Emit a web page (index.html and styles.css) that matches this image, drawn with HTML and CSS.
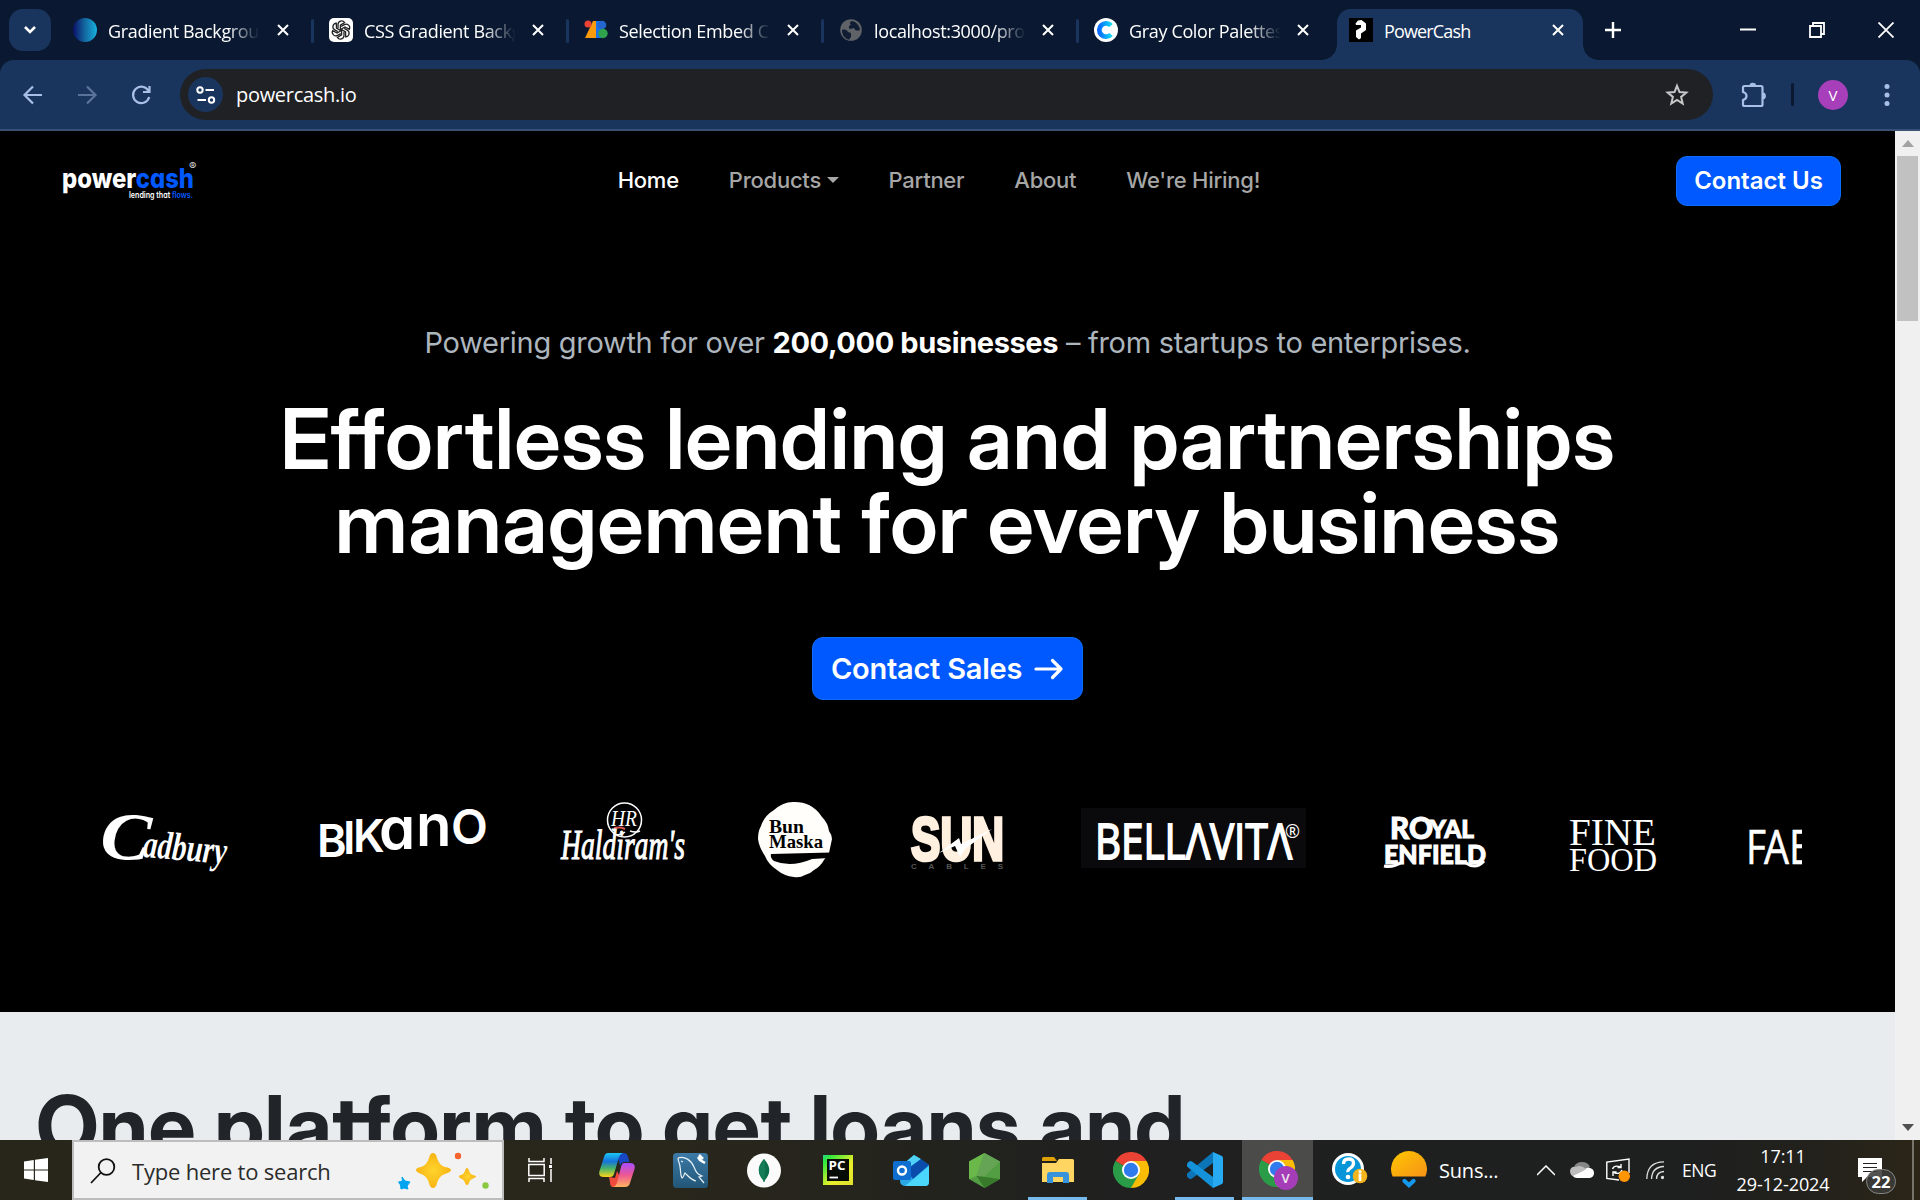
FILE: index.html
```html
<!DOCTYPE html>
<html lang="en">
<head>
<meta charset="utf-8">
<title>PowerCash</title>
<link rel="stylesheet" href="styles.css">
</head>
<body>
<svg class="defs" width="0" height="0">
  <defs>
    <symbol id="x" viewBox="0 0 12 12"><path d="M1 1 11 11M11 1 1 11" stroke="#fff" stroke-width="2" fill="none"/></symbol>
    <symbol id="chrome" viewBox="0 0 36 36">
      <path d="M18 18 2.4 9A18 18 0 0 1 33.6 9Z" fill="#ea4335"/>
      <path d="M18 18V9H33.6A18 18 0 0 1 18 36Z" fill="#fbbc05"/>
      <path d="M18 18 25.8 22.5 18 36A18 18 0 0 1 2.4 9Z" fill="#2a9c48"/>
      <circle cx="18" cy="18" r="9" fill="#fff"/><circle cx="18" cy="18" r="7.2" fill="#2f7bee"/>
    </symbol>
  </defs>
</svg>
<div class="screen">
  <header class="tabstrip">
    <button class="tab-search"><svg width="14" height="10" viewBox="0 0 14 10"><path d="M2 2l5 5 5-5" stroke="#fff" stroke-width="2.6" fill="none"/></svg></button>
    <div class="tabs">
      <div class="tab"><svg class="fav" viewBox="0 0 24 24"><defs><linearGradient id="gb"><stop offset="0" stop-color="#0b0f68"/><stop offset=".5" stop-color="#1369a0"/><stop offset="1" stop-color="#18b0e0"/></linearGradient></defs><circle cx="12" cy="12" r="12" fill="url(#gb)"/></svg><span class="title">Gradient Background</span><svg class="close"><use href="#x"/></svg></div>
      <div class="tab"><svg class="fav" viewBox="0 0 24 24"><rect width="24" height="24" rx="5" fill="#fff"/><g fill="none" stroke="#222" stroke-width="1.3"><path id="pt" d="M9 10V6.5a3.6 3.6 0 0 1 6.6-2l-4.200 2.600v5"/><use href="#pt" transform="rotate(60 12 12)"/><use href="#pt" transform="rotate(120 12 12)"/><use href="#pt" transform="rotate(180 12 12)"/><use href="#pt" transform="rotate(240 12 12)"/><use href="#pt" transform="rotate(300 12 12)"/></g></svg><span class="title">CSS Gradient Backgr</span><svg class="close"><use href="#x"/></svg></div>
      <div class="tab"><svg class="fav" viewBox="0 0 24 24"><path d="M1 20 9 3h4v17z" fill="#f99b0c"/><path d="M12 3h5a5 5 0 0 1 0 9v8h-5z" fill="#1a73e8"/><circle cx="18" cy="7" r="4.300" fill="#2466ce"/><circle cx="19" cy="15.500" r="4.700" fill="#2fa24b"/><circle cx="4" cy="6" r="3.500" fill="#ea4335"/></svg><span class="title">Selection Embed Co</span><svg class="close"><use href="#x"/></svg></div>
      <div class="tab"><svg class="fav" viewBox="0 0 24 24"><circle cx="12" cy="12" r="10.800" fill="#5f6368"/><path d="M3 12c3-1 5 0 6 2l3 1v4c-2 2-1 3-3 2.500A10 10 0 0 1 3 12zM13 3c-3 1-2 3-1 4-2 0-3 3-1 4l4-1c1 3 4 3 6 2A10 10 0 0 0 13 3z" fill="#101d33"/></svg><span class="title">localhost:3000/proj</span><svg class="close"><use href="#x"/></svg></div>
      <div class="tab"><svg class="fav" viewBox="0 0 24 24"><defs><linearGradient id="cg"><stop offset="0" stop-color="#0a6cff"/><stop offset="1" stop-color="#10d8f5"/></linearGradient></defs><circle cx="12" cy="12" r="12" fill="#fff"/><path d="M17 7.500a6.700 6.700 0 1 0 0 9" fill="none" stroke="url(#cg)" stroke-width="4.800"/></svg><span class="title">Gray Color Palettes</span><svg class="close"><use href="#x"/></svg></div>
      <div class="tab active"><svg class="fav" viewBox="0 0 24 24"><rect width="24" height="24"/><path d="M6.500 5.500 9 2.500 12.500 2 17 5.500V12L12 15.500V20L10 21.500 7 19V12.500L12 9.500V7H7z" fill="#fff"/></svg><span class="title">PowerCash</span><svg class="close"><use href="#x"/></svg></div>
    </div>
    <svg class="plus" width="16" height="16" viewBox="0 0 16 16"><path d="M8 0V16M0 8H16" stroke="#fff" stroke-width="2.400"/></svg>
    <div class="window-controls">
      <svg width="16" height="16" viewBox="0 0 16 16"><path d="M0 7.500H16" stroke="#fff" stroke-width="2"/></svg>
      <svg width="16" height="16" viewBox="0 0 16 16"><path d="M1 4H12V15H1ZM4 4V1H15V12H12" fill="none" stroke="#fff" stroke-width="1.800"/></svg>
      <svg width="16" height="16" viewBox="0 0 16 16"><path d="M.5.5 15.500 15.500M15.500.5.5 15.500" stroke="#fff" stroke-width="1.800"/></svg>
    </div>
  </header>

  <div class="toolbar">
    <svg class="tool" viewBox="0 0 24 24"><path d="M21 12H4M12 3.500 3.500 12l8.500 8.500" fill="none" stroke="#a9c0e6" stroke-width="2.200"/></svg>
    <svg class="tool" viewBox="0 0 24 24"><path d="M3 12H20M12 3.500 20.500 12 12 20.500" fill="none" stroke="#5a7398" stroke-width="2.200"/></svg>
    <svg class="tool" viewBox="0 0 24 24"><path d="M19.500 8A8.200 8.200 0 1 0 20.200 14M20.500 3V9H14" fill="none" stroke="#a9c0e6" stroke-width="2.200"/></svg>
    <div class="omnibox">
      <span class="site-info"><svg width="20" height="20" viewBox="0 0 20 20" fill="none" stroke="#fff" stroke-width="2"><circle cx="4" cy="5" r="2.700"/><path d="M9.500 5H18M1.500 15H10"/><circle cx="15.500" cy="15" r="2.700"/></svg></span>
      <span class="url">powercash.io</span>
      <svg class="star" width="24" height="24" viewBox="0 0 24 24"><path d="M12 2.800 14.500 9.100 21.300 9.500 16.100 13.900 17.700 20.500 12 16.900 6.300 20.500 7.900 13.900 2.700 9.500 9.500 9.100Z" fill="none" stroke="#c7c7c7" stroke-width="2"/></svg>
    </div>
    <svg class="puzzle" width="26" height="26" viewBox="0 0 26 26"><path d="M2 5.500Q2 4 3.500 4H20Q21.500 4 21.500 5.500V22.500Q21.500 24 20 24H3.500Q2 24 2 22.500V18Q5.500 17 5.500 14T2 10Z" fill="none" stroke="#a9c0e6" stroke-width="2.200"/><path d="M8.500 4a3.300 3.300 0 0 1 6.600 0M21.500 10.500a3.400 3.400 0 0 1 0 6.800" fill="#a9c0e6"/></svg>
    <span class="divider"></span>
    <span class="avatar">V</span>
    <svg class="dots" width="6" height="24" viewBox="0 0 6 24" fill="#a9c0e6"><circle cx="3" cy="3.500" r="2.500"/><circle cx="3" cy="12" r="2.500"/><circle cx="3" cy="20.500" r="2.500"/></svg>
  </div>

  <div class="viewport">
    <main class="page">
      <section class="hero">
        <nav class="nav">
          <svg class="brand" width="140" height="44" viewBox="60 158 140 44">
            <text class="geo" x="62" y="186.500" font-size="27" font-weight="800" textLength="132" lengthAdjust="spacingAndGlyphs" fill="#fff">power<tspan fill="#0059ff">cash</tspan></text>
            <text class="geo" x="129" y="196.500" font-size="8.800" font-weight="600" textLength="64" lengthAdjust="spacingAndGlyphs" fill="#fff">lending that <tspan fill="#0059ff">flows.</tspan></text>
            <text class="geo" x="189" y="169" font-size="11" fill="#ddd">®</text>
          </svg>
          <div class="links">
            <a class="current">Home</a><a>Products<i class="caret"></i></a><a>Partner</a><a>About</a><a>We're Hiring!</a>
          </div>
          <a class="btn contact">Contact Us</a>
        </nav>
        <p class="lead">Powering growth for over <b>200,000 businesses</b> – from startups to enterprises.</p>
        <h1>Effortless lending and partnerships<br>management for every business</h1>
        <a class="btn sales"><span>Contact Sales</span><svg width="30" height="24" viewBox="0 0 30 24"><path d="M2 12H27M18.500 3.500 27 12l-8.500 8.500" fill="none" stroke="#fff" stroke-width="3.200" stroke-linecap="round" stroke-linejoin="round"/></svg></a>
        <div class="clients">
          <svg width="207" height="90" viewBox="93 795 207 90" fill="#fff"><g transform="translate(99 857) rotate(5)"><text class="script" y="0" font-size="68" textLength="50" lengthAdjust="spacingAndGlyphs">C</text><text class="script" x="43" y="-4" font-size="39" textLength="84" lengthAdjust="spacingAndGlyphs">adbury</text></g></svg>
          <svg width="240" height="90" viewBox="300 795 240 90" fill="#fff"><text class="geo" font-size="45" font-weight="600" x="317 343 353 379 416 451" y="857 854 852 849 846 844">BIK<tspan font-size="58">an</tspan><tspan font-size="48">O</tspan></text></svg>
          <svg width="200" height="90" viewBox="540 795 200 90" fill="#fff"><circle cx="624.500" cy="820" r="17" fill="none" stroke="#fff" stroke-width="1.500"/><text class="serif" font-style="italic" x="611" y="826" font-size="24" textLength="26" lengthAdjust="spacingAndGlyphs">HR</text><path d="M614 828.500q5-2 11 .5" stroke="#d55" stroke-width="2" fill="none"/><path d="M613 833q6 4 12-1M630 831q6 2 10 0" stroke="#fff" stroke-width="1.500" fill="none"/><text class="serif" font-style="italic" x="561" y="859" font-size="42" stroke="#fff" stroke-width="1.100" textLength="124" lengthAdjust="spacingAndGlyphs">Haldiram's</text></svg>
          <svg width="140" height="90" viewBox="740 795 140 90"><path d="M795 802q8 0 14 3q8 4 13 12q6 6 7 14q3 4 3 8l-3 14-5 7q-4 7-10 10-4 4-9 5-5 3-11 2-10-1-17-7-9-6-12-14-6-9-7-17 0-8 3-13 3-10 13-16 10-9 21-8Z" fill="#fffefa"/><text class="serif" x="769" y="833" font-size="19" font-weight="700" textLength="35" lengthAdjust="spacingAndGlyphs">Bun</text><text class="serif" x="769" y="848" font-size="19" font-weight="700" textLength="54" lengthAdjust="spacingAndGlyphs">Maska</text><path d="M771 854 831 852.500 829 858 812 859Q791 868 774 861Q770 858 771 854Z"/></svg>
          <svg width="180" height="90" viewBox="880 795 180 90"><text class="cond" x="911" y="860" font-size="62" textLength="93" lengthAdjust="spacingAndGlyphs" fill="#fff0df" stroke="#fff0df" stroke-width="3.500">SUN</text><path d="M939 853 959 838 961 844 992 829 965 849 960 857 955 846Z" fill="#fff"/><text class="cond" x="911" y="869" font-size="8" textLength="92" fill="#555">CABLES</text></svg>
          <svg width="280" height="90" viewBox="1060 795 280 90" fill="#fff"><rect x="1081" y="808" width="225" height="60" fill="#0a0a0c"/><text class="sans" x="1095" y="859" font-size="50" textLength="197" lengthAdjust="spacingAndGlyphs" stroke="#fff" stroke-width="1.800">BELLΛVITΛ</text><text class="sans" x="1285" y="838" font-size="19" textLength="15" lengthAdjust="spacingAndGlyphs">®</text></svg>
          <svg width="200" height="90" viewBox="1340 795 200 90" fill="#fff" stroke="#fff"><text class="heavy" x="1390" y="839" font-size="30" textLength="43" lengthAdjust="spacingAndGlyphs">RO</text><text class="heavy" x="1430" y="838" font-size="25" textLength="44" lengthAdjust="spacingAndGlyphs">YAL</text><text class="heavy" x="1384" y="864" font-size="26" textLength="102" lengthAdjust="spacingAndGlyphs">ENFIELD</text><path d="M1384 866q9 2 18-4M1466 863q10 7 18-2" stroke-width="3" fill="none"/></svg>
          <svg width="200" height="90" viewBox="1540 795 200 90" fill="#fff"><text class="serif" x="1569" y="844.500" font-size="38" textLength="87" lengthAdjust="spacingAndGlyphs">FINE</text><text class="serif" x="1569" y="870.500" font-size="33" textLength="88" lengthAdjust="spacingAndGlyphs">FOOD</text></svg>
          <svg width="62" height="90" viewBox="1740 795 62 90" fill="#fff" stroke="#fff" stroke-width=".6"><text class="sans" y="864" font-size="47"><tspan x="1746" textLength="20" lengthAdjust="spacingAndGlyphs">F</tspan><tspan x="1764" textLength="25" lengthAdjust="spacingAndGlyphs">A</tspan><tspan x="1789" textLength="22" lengthAdjust="spacingAndGlyphs">E</tspan></text></svg>
        </div>
      </section>
      <section class="platform"><h2>One platform to get loans and</h2></section>
    </main>
    <div class="scrollbar">
      <svg width="12" height="7" viewBox="0 0 12 7"><path d="M0 7 6 0l6 7z" fill="#a3a3a3"/></svg>
      <span class="thumb"></span>
      <svg class="down" width="12" height="7" viewBox="0 0 12 7"><path d="M0 0H12L6 7z" fill="#505050"/></svg>
    </div>
  </div>

  <footer class="taskbar">
    <div class="start"><svg width="24" height="24" viewBox="0 0 24 24" fill="#fff"><path d="M0 3.400 9.800 2V11.400H0ZM11 1.800 24 0V11.400H11ZM0 12.600H9.800V22L0 20.600ZM11 12.600H24V24L11 22.200Z"/></svg></div>
    <div class="search">
      <svg width="26" height="26" viewBox="0 0 26 26"><circle cx="16.500" cy="9" r="7.800" fill="none" stroke="#111" stroke-width="1.800"/><path d="M11 14.500 1 25" stroke="#111" stroke-width="1.800"/></svg>
      <span>Type here to search</span>
      <svg class="sparkles" width="92" height="40" viewBox="396 1150 92 40"><defs><radialGradient id="sp"><stop offset="0" stop-color="#ffd42c"/><stop offset="1" stop-color="#f8b414"/></radialGradient></defs><path d="M432 1152q3 0 4 5 2 7 8 9 6 1 6 3t-6 4q-6 2-8 9-1 5-4 5t-4-5q-2-7-8-9-5-2-5-4t5-3q6-2 8-9 1-5 4-5Z" fill="url(#sp)"/><path d="M466 1167q1.500 0 2 3 1 3 4 4 3 .5 3 1.500t-3 2q-3 1-4 4-.5 2.500-2 2.500t-2-2.500q-1-3-4-4-2-.5-2-2t2-1.500q3-1 4-4 .5-3 2-3Z" fill="url(#sp)"/><path d="m401 1176 3 4 5 1-3 4 1 3-4-1-3 1-.5-4-2-3 4-1z" fill="#00a4ef" stroke="#00a4ef"/><circle cx="457" cy="1155" r="3.200" fill="#f4622d"/><circle cx="484.500" cy="1184.500" r="3.200" fill="#8bc840"/></svg>
    </div>
    <div class="apps">
      <span class="app"><svg width="24" height="24" viewBox="0 0 24 24" fill="none" stroke="#fff" stroke-width="1.500"><path d="M1 0V3.500H16V0M1 24V20.500H16V24M.8 6.500H16.200V17.500H.8ZM23 0V6M23 11V24"/><path d="M21 8.500h3.500" stroke-width="3"/></svg></span>
      <span class="app copilot"><svg width="36" height="34" viewBox="0 0 36 34"><defs><linearGradient id="c1" x2="0" y2="1"><stop stop-color="#1ac8f5"/><stop offset=".35" stop-color="#1672dc"/><stop offset=".65" stop-color="#48b567"/><stop offset="1" stop-color="#ffd51c"/></linearGradient><linearGradient id="c2" x2="0" y2="1"><stop stop-color="#a84dff"/><stop offset=".5" stop-color="#ed5792"/><stop offset="1" stop-color="#ffb45e"/></linearGradient></defs><path d="M18 0h7q3 0 4 4l1.500 5H26q-4 0-5 4z" fill="#1747c4"/><path d="M16 25 18 18l3 6-1 10h-7q-2-1-2-5l-1-5z" fill="#f04a3c"/><path d="M9 0H24q-3 1-4 4l-5 17q-1 3-4 3H5q-6 0-4.500-6L5 4Q6 0 9 0Z" fill="url(#c1)"/><path d="M25 10h6q6 0 4.500 6L31 30q-1 4-5 4H14q3-1 4-4l4-16q1-4 3-4Z" fill="url(#c2)"/></svg></span>
      <span class="app"><svg width="35" height="35" viewBox="0 0 35 35"><defs><linearGradient id="my" x2="0" y2="1"><stop stop-color="#3c7aa8"/><stop offset="1" stop-color="#225677"/></linearGradient></defs><rect width="35" height="35" rx="3.500" fill="url(#my)"/><path d="M5 5c7-2 13 2 16 9 2 5 3 7 8 9l-3 1 5 6M5 5c0 4 2 5 2 9 1 4 0 8 2 11 2-1 2-4 3-5 3 3 6 7 11 8M8 8l2 1" fill="none" stroke="#e6f1f7" stroke-width="1.200"/><path d="m25 4 2 3 5 3M26 2l4 4" stroke="#fff" stroke-width="2.500" fill="none"/></svg></span>
      <span class="app"><svg width="34" height="35" viewBox="0 0 34 35"><circle cx="17" cy="17.500" r="17" fill="#fbfbfb"/><path d="M17 6q10 11 1 21l-.5 2h-1L16 27Q7 17 17 6Z" fill="#0a6e49"/><path d="M17 6q3 10 0 22-10-11 0-22Z" fill="#147d57"/></svg></span>
      <span class="app"><svg width="30" height="30" viewBox="0 0 30 30"><defs><linearGradient id="pc" x2="1" y2="1"><stop stop-color="#21d789"/><stop offset=".15" stop-color="#33e83b"/><stop offset=".6" stop-color="#e9ee28"/><stop offset="1" stop-color="#e0e030"/></linearGradient></defs><rect width="30" height="30" fill="url(#pc)"/><rect x="4" y="4" width="22" height="22" fill="#070b05"/><text class="sans" x="5.500" y="15" font-size="11.500" font-weight="700" fill="#fff" textLength="17" lengthAdjust="spacingAndGlyphs">PC</text><path d="M6.500 22.500H15" stroke="#fff" stroke-width="1.800"/></svg></span>
      <span class="app"><svg width="36" height="31" viewBox="0 0 36 31"><path d="M9 10 21 0 36 10V27q0 4-4 4H13q-6 0-6-5z" fill="#29a8e5"/><path d="m21 0 7 4-14 10V6z" fill="#50d2f7"/><path d="m28 4 8 6-16 14-7-9z" fill="#0a4cac"/><path d="M36 11V27q0 4-4 4H12z" fill="#4bd7fb"/><rect y="6" width="18" height="19" rx="2" fill="#0f6fd0"/><circle cx="9" cy="15.500" r="4" fill="none" stroke="#fff" stroke-width="2.400"/></svg></span>
      <span class="app"><svg width="31" height="35" viewBox="0 0 31 35"><path d="M15.500 0 31 8.500V26L15.500 35 0 26V8.500Z" fill="#539e43"/><path d="m15.500 0-8 23L0 26V8.500Z" fill="#6ab84a"/><path d="m7.500 23 8 12 15.500-9z" fill="#38792c"/><path d="m15.500 0 15.500 8.500L16 23 7.500 23Z" fill="#64a454"/></svg></span>
      <span class="app running"><svg width="32" height="27" viewBox="0 0 32 27"><path d="M0 1.500Q0 0 1.500 0H12l3 4H0Z" fill="#dea003"/><path d="M0 6 14 6 17 2H30.500Q32 2 32 3.500V25H0Z" fill="#ffd561"/><path d="M5 26V18q0-3 3-3H24q3 0 3 3V26H21V20H11V26Z" fill="#3794dc"/></svg></span>
      <span class="app"><svg width="36" height="36"><use href="#chrome"/></svg></span>
      <span class="app running"><svg width="36" height="36" viewBox="0 0 36 36"><path d="M26 0V11L5 26.500q-1.500 1-3 0l-2-2q-1-1.500 0-3z" fill="#0b75b8"/><path d="M26 36V25L5 9.500q-1.500-1-3 0l-2 2q-1 1.500 0 3z" fill="#1593da"/><path d="m26 0 9 4q1 1 1 2V30q0 1-1 2l-9 4Z" fill="#28aaf2"/></svg></span>
      <span class="app current-app"><svg width="40" height="40" viewBox="0 0 40 40"><use href="#chrome" width="36" height="36" y="1"/><circle cx="27" cy="28" r="12" fill="#a63db8"/><text class="sans" x="22.500" y="33" font-size="13" font-weight="600" fill="#eee">V</text></svg></span>
      <span class="app"><svg width="36" height="34" viewBox="0 0 36 34"><circle cx="16" cy="16" r="16" fill="#fff"/><circle cx="16" cy="16" r="13" fill="#0795d9"/><path d="M11.500 11q0-5 5-5t5 4q0 3-3 5t-2.500 4" fill="none" stroke="#fff" stroke-width="3.300"/><circle cx="16" cy="24" r="2.300" fill="#fff"/><circle cx="28" cy="23" r="7.300" fill="#f4b41c"/><path d="M28 20.500V28" stroke="#fff" stroke-width="2.700"/><circle cx="28" cy="18.500" r="1.500" fill="#fff"/></svg></span>
    </div>
    <div class="weather"><svg width="36" height="38" viewBox="0 0 36 38"><defs><linearGradient id="sn" x2="1" y2="1"><stop stop-color="#ffc700"/><stop offset="1" stop-color="#f59218"/></linearGradient></defs><path d="M1.600 25.500A18 18 0 1 1 34.400 25.500Z" fill="url(#sn)"/><path d="m13.500 30 4.500 4 4.500-4" fill="none" stroke="#1698ec" stroke-width="4.300" stroke-linecap="round"/></svg><span>Suns...</span></div>
    <div class="tray">
      <svg width="18" height="11" viewBox="0 0 18 11"><path d="M0 10 9 1l9 9" fill="none" stroke="#fff" stroke-width="1.500"/></svg>
      <svg width="24" height="16" viewBox="0 0 24 16"><path d="M4 5q2-5 8-5t8 5l-6 4z" fill="#868686"/><path d="M5 15q-5-1-5-6 1-5 6-4 3-2 7 0l5 3-9 7z" fill="#bdbdbd"/><path d="M3 14 15 8q1-3 5-2 4 1 4 5t-4 5H7q-3 0-4-2z" fill="#fff"/></svg>
      <svg width="24" height="24" viewBox="0 0 24 24" fill="none" stroke="#fff" stroke-width="1.400"><path d="M13 22 .8 20.500V4L23 1V15"/><path d="M6.500 11q2-4.500 8-2M15 6v3.500h-3.500M16 12q-2 5-8 2.500M7 18v-4h3.500"/><circle cx="18.300" cy="18.300" r="5.700" fill="#ff9500" stroke="none"/></svg>
      <svg width="18" height="19" viewBox="0 0 18 19" fill="none" stroke="#ddd" stroke-width="1.300"><path d="M.8 18Q1 1 18 .8M5.500 18Q6 6 18 5.500M10.500 18q0-7 7.500-7.500"/><circle cx="16.500" cy="16.500" r="1" fill="#fff"/></svg>
      <span class="lang">ENG</span>
      <span class="clock">17:11<br>29-12-2024</span>
      <svg class="notif" width="40" height="38" viewBox="0 0 40 38"><path d="M0 0H24V19H9l-5 5V19H0Z" fill="#fff"/><path d="M5 5.500H19M5 9.500H19M5 13.500H19" stroke="#222" stroke-width="1.200"/><rect x="8.500" y="11.500" width="29" height="24" rx="12" fill="#3a3b39" fill-opacity=".88" stroke="#858585"/><text class="sans" x="13.500" y="30" font-size="16.500" font-weight="700" textLength="19" lengthAdjust="spacingAndGlyphs" fill="#fff">22</text></svg>
      <i class="show-desktop"></i>
    </div>
  </footer>
</div>
</body>
</html>
```
FILE: styles.css
```css
* { box-sizing: border-box; }
body { margin: 0; background: #000; font-family: Inter, sans-serif; overflow: hidden; }
svg { display: block; flex: none; }
.defs { position: absolute; }
.screen { width: 1920px; height: 1200px; display: flex; flex-direction: column; overflow: hidden; background: #0a1931; }

.tabstrip { height: 60px; flex: none; display: flex; align-items: center; padding-left: 9px; font-family: "Open Sans", sans-serif; }
.tab-search { width: 42px; height: 42px; border: 0; border-radius: 14px; background: #1a355d; padding: 0; display: grid; place-items: center; }
.tabs { display: flex; align-self: stretch; margin-left: 20px; }
.tab { position: relative; width: 255px; display: flex; align-items: center; }
.tab .fav { width: 24px; height: 24px; margin-left: 15px; }
.tab:nth-child(1) { width: 243px; }
.tab:nth-child(1) .fav { margin-left: 2px; }
.tab:nth-child(n+2):nth-child(-n+5)::before { content: ""; position: absolute; left: -3px; top: 19px; width: 3px; height: 24px; background: #1a355d; border-radius: 2px; }
.title { width: 153px; margin: 2px 0 0 11px; overflow: hidden; white-space: nowrap; color: #fff; font-size: 18px; letter-spacing: -.35px; }
.tab:not(.active) .title { -webkit-mask-image: linear-gradient(90deg, #000 78%, transparent 99%); mask-image: linear-gradient(90deg, #000 78%, transparent 99%); }
.close { width: 12px; height: 12px; margin-left: 15px; }
.tab:nth-child(1) .close { margin-left: 16px; }
.active { margin: 9px 0 0 3px; width: 246px; border-radius: 14px 14px 0 0; background: #1a355d; padding-bottom: 9px; }
.active .fav { margin-left: 12px; }
.active .title { letter-spacing: -.85px; }
.active::before, .active::after { content: ""; position: absolute; bottom: 0; width: 15px; height: 15px; }
.active::before { left: -15px; background: radial-gradient(circle at 0 0, transparent 14.500px, #1a355d 15px); }
.active::after { right: -15px; background: radial-gradient(circle at 100% 0, transparent 14.500px, #1a355d 15px); }
.plus { margin-left: 22px; }
.window-controls { margin-left: auto; display: flex; gap: 53px; padding-right: 26px; }

.toolbar { height: 71px; flex: none; border-bottom: 2px solid #385277; background: #1a355d; display: flex; align-items: center; padding-left: 21px; border-radius: 14px 14px 0 0; }
.tool { width: 24px; height: 24px; margin-right: 30px; }
.omnibox { width: 1533px; height: 51px; margin-left: -3px; border-radius: 26px; background: #202124; display: flex; align-items: center; padding: 0 24px 0 8px; color: #fff; }
.site-info { width: 35px; height: 35px; border-radius: 50%; background: #1a355d; display: grid; place-items: center; }
.url { margin-left: 13px; font: 20px "Open Sans", sans-serif; letter-spacing: -.3px; }
.star { margin-left: auto; }
.puzzle { margin-left: 28px; }
.divider { width: 3px; height: 23px; margin-left: 24px; background: #0a1931; border-radius: 2px; }
.avatar { width: 30px; height: 30px; margin-left: 24px; border-radius: 50%; background: #a63fb9; color: #fff; display: grid; place-items: center; font: 15px "Open Sans", sans-serif; }
.dots { margin-left: 36px; }

.viewport { height: 1009px; display: flex; }
.page { width: 1895px; overflow: hidden; }
.hero { height: 881px; background: #000; display: flex; flex-direction: column; align-items: center; }
.nav { width: 100%; height: 50px; margin-top: 25px; display: flex; align-items: center; padding: 0 54px 0 60px; }
.links { display: flex; gap: 50px; margin-left: 417.700px; padding-bottom: 2px; color: #a6a6a6; font-size: 22px; font-weight: 500; letter-spacing: -.25px; white-space: nowrap; }
.links .current { color: #fff; }
.caret { display: inline-block; border: 6px solid transparent; border-top-color: currentColor; border-bottom: 0; margin-left: 5.500px; vertical-align: 5px; }
.btn { display: flex; align-items: center; justify-content: center; color: #fff; background: #0059ff; border-radius: 11px; font-weight: 600; white-space: nowrap; border: 1px solid #0d6efd; }
.contact { width: 165px; height: 50px; margin-left: auto; padding-bottom: 2px; font-size: 24px; }
.lead { height: 40px; margin: 117px 0 0; line-height: 40px; font-size: 29px; letter-spacing: -.29px; color: #adb5bd; white-space: nowrap; }
.lead b { color: #fff; letter-spacing: -.4px; }
h1, h2 { margin: 0; font-family: "Inter Display", Inter, sans-serif; font-size: 84px; line-height: 84px; letter-spacing: .25px; white-space: nowrap; }
h1 { margin-top: 34px; color: #fff; font-weight: 600; text-align: center; }
.sales { width: 271px; height: 63px; margin-top: 72px; gap: 12px; font-size: 29px; letter-spacing: -.25px; }
.clients { width: 100%; margin-top: 95px; padding-left: 93px; display: flex; }
.geo { font-family: Inter, sans-serif; font-feature-settings: "cv11"; }
.script { font-family: "Liberation Serif", serif; font-style: italic; font-weight: 700; }
.serif { font-family: "Liberation Serif", serif; }
.sans { font-family: "Open Sans", sans-serif; }
.cond { font-family: "Liberation Sans", sans-serif; font-weight: 700; }
.heavy { font-family: Lato, sans-serif; font-weight: 900; }
.platform { height: 128px; overflow: hidden; background: #e8ecef; padding: 72px 0 0 36px; }
h2 { color: #212529; font-weight: 700; }

.scrollbar { width: 25px; background: #f0f0f0; display: flex; flex-direction: column; align-items: center; padding: 9px 0 9px; }
.thumb { width: 21px; height: 165px; margin-top: 9px; background: #c1c1c1; }
.down { margin-top: auto; }

.taskbar { height: 60px; flex: none; display: flex; background: linear-gradient(90deg, #28251a, #29271c 35%, #1f201f 58%, #1e1f1f 88%, #22211c 94%, #2c2618); color: #fff; font-family: "Open Sans", sans-serif; }
.start { width: 72px; display: grid; place-items: center; }
.search { width: 432px; background: #f2f2f2; border: 2px solid #bdbdbd; display: flex; align-items: center; padding: 2px 13px 0 16px; color: #2b2b2b; font-size: 22px; }
.search span { margin-left: 16px; letter-spacing: -.2px; white-space: nowrap; }
.sparkles { margin-left: auto; }
.apps { display: flex; width: 881px; }
.app { width: 59px; margin-right: 14.400px; display: grid; place-items: center; flex: none; }
.app:first-child { width: 71px; margin-right: 12px; }
.copilot { margin-right: 15.400px; }
.running { border-bottom: 3px solid #76b9ed; padding-top: 3px; }
.current-app { width: 71px; margin: 0 7.500px 0 -7px; background: #4b4b4a; border-bottom: 3px solid #76b9ed; padding: 3px 0 0 3px; }
.weather { width: 138px; display: flex; align-items: center; gap: 12px; padding-left: 6px; font-size: 20px; letter-spacing: -.2px; }
.tray { flex: 1; display: flex; align-items: center; padding-left: 14px; }
.tray svg:nth-child(2) { margin-left: 15px; }
.tray svg:nth-child(3) { margin-left: 12px; }
.tray svg:nth-child(4) { margin-left: 16px; }
.lang { width: 34px; margin-left: 18px; font-size: 17.500px; letter-spacing: -.5px; }
.clock { width: 100px; margin-left: 17px; font-size: 18px; line-height: 28px; text-align: center; letter-spacing: -.1px; white-space: nowrap; }
.notif { margin: 14px 0 0 25px; }
.show-desktop { width: 2px; height: 60px; margin-left: auto; margin-right: 6px; background: #77746c; }
```
